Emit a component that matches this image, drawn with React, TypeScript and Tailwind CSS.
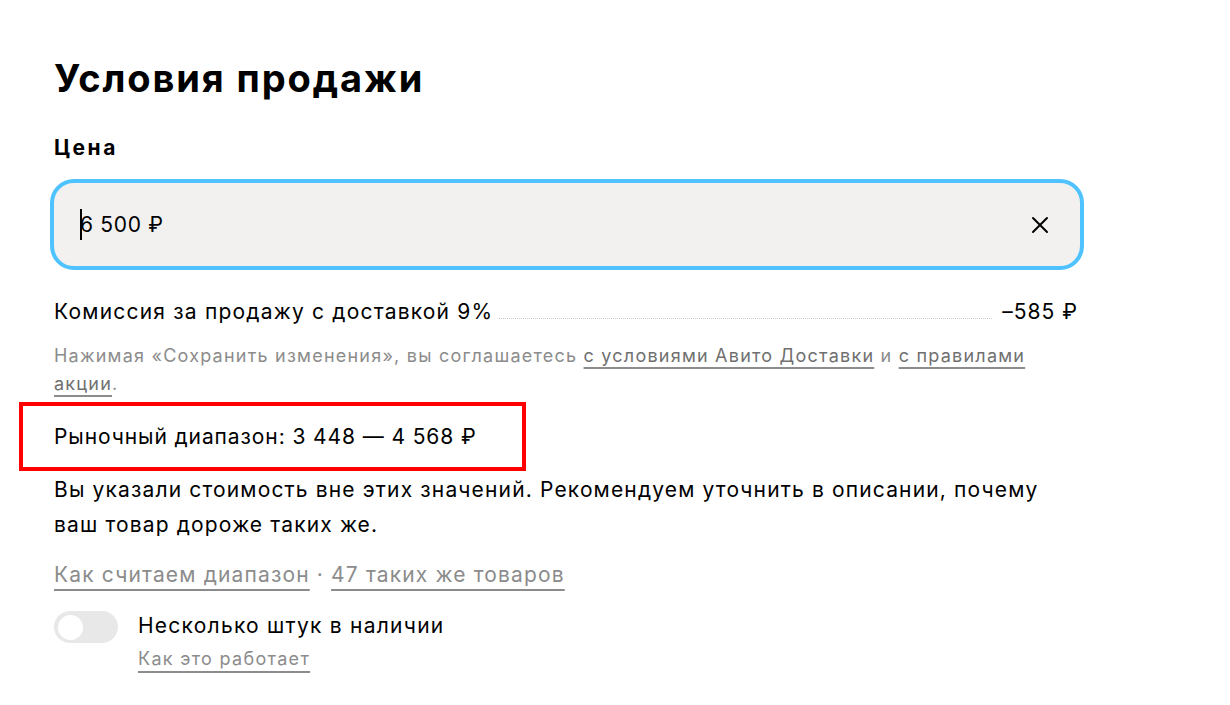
import React from "react";

export default function App() {
  return (
    <div
      className="min-h-screen bg-white text-[#000000]"
      style={{ fontFamily: "Inter, 'Noto Sans', sans-serif" }}
    >
      <div className="w-[1034px] ml-[50px] pt-[56px]">
        <div className="pl-[4px]">
          <h1 className="text-[38px] leading-[44px] font-bold tracking-[1.9px]">
            Условия продажи
          </h1>
          <div className="mt-[34px] text-[21px] leading-[28px] font-bold tracking-[2.5px]">Цена</div>
        </div>

        <div className="mt-[17px] h-[91px] rounded-[24px] border-[4px] border-[#4fc3ff] bg-[#f2f1f0] flex items-center pl-[26px] pr-[30px]">
          <div className="flex-1 flex items-center text-[21px] leading-[28px] tracking-[0.7px]">
            <span className="inline-block w-[1.5px] h-[31px] bg-black mr-[-1.5px]" />
            <span>6 500 ₽</span>
          </div>
          <svg width="20" height="20" viewBox="0 0 20 20" fill="none">
            <path d="M3 3 L17 17 M17 3 L3 17" stroke="#000" strokeWidth="2" strokeLinecap="round" />
          </svg>
        </div>

        <div className="pl-[4px] pr-[6px]">
          <div className="mt-[28px] flex items-end text-[21px] leading-[28px]">
            <span className="tracking-[1.2px]">Комиссия за продажу с доставкой 9%</span>
            <span className="flex-1 mx-[6px] mb-[7px] border-b-[1.5px] border-dotted border-[#c9c9c9]" />
            <span className="tracking-[1px] ml-[4px]">–585 ₽</span>
          </div>

          <p className="mt-[16px] text-[18px] leading-[28px] text-[#8c8c8c] tracking-[1.22px]">
            Нажимая «Сохранить изменения», вы соглашаетесь{" "}
            <span className="text-[#707070] underline decoration-[#8c8c8c] decoration-[2px] underline-offset-[5px]">
              с условиями Авито Доставки
            </span>{" "}
            и{" "}
            <span className="text-[#707070] underline decoration-[#8c8c8c] decoration-[2px] underline-offset-[5px]">
              с правилами акции
            </span>
            .
          </p>

          <div className="mt-[4px] -ml-[35px] w-[507px] border-[4px] border-[#ff0000] pl-[31px] pt-[17px] pb-[16px] text-[21px] leading-[28px] tracking-[0.9px]">
            Рыночный диапазон: 3 448 — 4 568 ₽
          </div>

          <p className="mt-[1px] text-[21px] leading-[35px] tracking-[1.15px]">
            Вы указали стоимость вне этих значений. Рекомендуем уточнить в описании, почему
            ваш товар дороже таких же.
          </p>

          <div className="mt-[19px] text-[21px] leading-[28px] text-[#8c8c8c] tracking-[1.15px]">
            <span className="underline decoration-[#8c8c8c] decoration-[2px] underline-offset-[7px]">
              Как считаем диапазон
            </span>
            <span> · </span>
            <span className="underline decoration-[#8c8c8c] decoration-[2px] underline-offset-[7px]">
              47 таких же товаров
            </span>
          </div>

          <div className="mt-[22px] flex items-start">
            <div className="w-[64px] h-[32px] rounded-full bg-[#e8e8e8] flex items-center pl-[4px] shrink-0">
              <div className="w-[25px] h-[25px] rounded-full bg-white" />
            </div>
            <div className="ml-[20px]">
              <div className="text-[21px] leading-[30px] tracking-[1.25px]">Несколько штук в наличии</div>
              <div className="mt-[6px] inline-block text-[18px] leading-[24px] text-[#8c8c8c] tracking-[1.3px] underline decoration-[#8c8c8c] decoration-[2px] underline-offset-[6px]">
                Как это работает
              </div>
            </div>
          </div>
        </div>
      </div>
    </div>
  );
}
